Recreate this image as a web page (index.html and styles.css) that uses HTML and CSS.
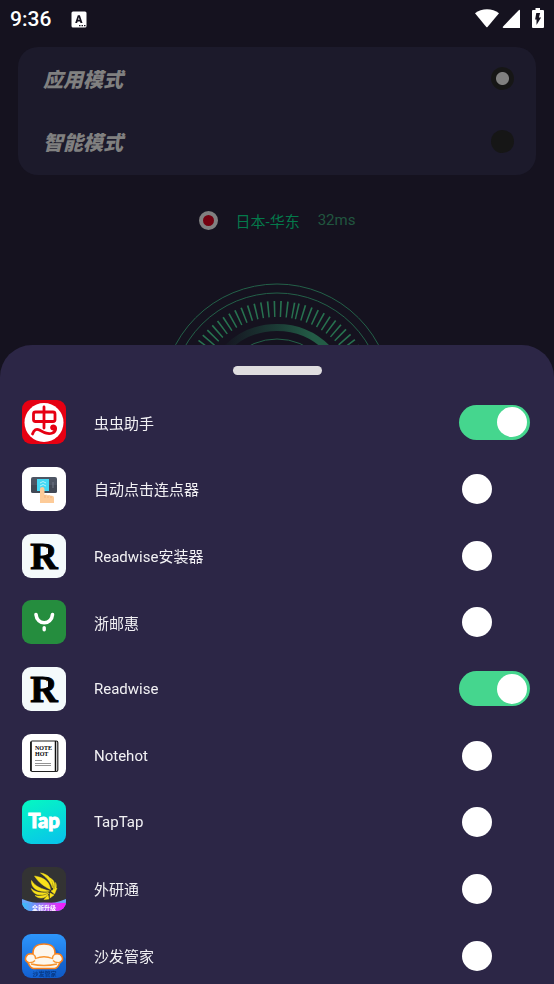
FILE: index.html
```html
<!DOCTYPE html>
<html lang="zh-CN">
<head>
<meta charset="utf-8">
<meta name="viewport" content="width=device-width, initial-scale=1">
<title>应用模式</title>
<link rel="stylesheet" href="styles.css">
</head>
<body>
<header class="status">
  <span class="clock">9:36</span>
  <svg class="notice" viewBox="0 0 16 17" aria-hidden="true"><rect x="0.5" y="0.5" width="15" height="16" rx="1.5" fill="#fff"/><path d="M4.2 12 6.8 4.2h2.1L11.5 12H9.5L9 10.4H6.6L6.1 12zM7.1 8.8h1.5L7.8 6.3z" fill="#15121f"/><path d="M8 14h1.5v1.2H8zm2.5 0H12v1.2h-1.500zm2.500 0h1.500v1.200H13z" fill="#15121f"/></svg>
  <svg class="signals" viewBox="0 0 72 22" aria-hidden="true"><path d="M1 5.300C7.500-.2 18.500-.2 25 5.300L13.500 19q-.6.500-1.200 0z" fill="#fff"/><path d="M46 2.200V20H29.800q-1.800-.2-.7-1.600L44.500 2.500Q46 1.200 46 2.200z" fill="#fff"/><path d="M61.500 0h4.500v2h3q1 0 1 1v16q0 1-1 1H59q-1 0-1-1V3q0-1 1-1h2.500z" fill="#fff"/><path d="M62.300 5h3.800l-1.200 4.600h2.200L62.500 17v-5.600h-1.400z" fill="#15121f"/></svg>
</header>

<main class="page">
  <section class="modes">
    <label class="mode">应用模式<input class="radio" type="radio" name="mode" checked></label>
    <label class="mode">智能模式<input class="radio" type="radio" name="mode"></label>
  </section>
  <p class="server"><span class="flag"></span><span class="place">日本-华东</span><span class="ping">32ms</span></p>
  <svg class="dial" viewBox="0 0 232 232" aria-hidden="true">
    <defs><linearGradient id="arc" x1="0" x2="1"><stop offset="0.1" stop-color="#15121f"/><stop offset="0.5" stop-color="#1b3b35"/><stop offset="0.75" stop-color="#235c46"/></linearGradient></defs>
    <g fill="none" stroke="#236048">
      <circle cx="116" cy="116" r="115"/>
      <circle cx="116" cy="116" r="106"/>
      <circle cx="116" cy="116" r="90" pathLength="360" stroke="#27714f" stroke-width="16" stroke-dasharray="1 2.970" transform="rotate(-77.500 116 116)"/>
      <circle cx="116" cy="116" r="71.500" stroke="url(#arc)" stroke-width="7"/>
      <circle cx="116" cy="116" r="60"/>
    </g>
  </svg>
</main>

<section class="sheet" aria-label="应用列表">
  <div class="handle"></div>
  <div class="apps">
    <label class="app">
      <svg class="icon" viewBox="0 0 44 44" aria-hidden="true"><rect width="44" height="44" fill="#e60012"/><circle cx="22" cy="22.500" r="19.500" fill="#fff"/><g fill="none" stroke="#e60012" stroke-width="2.800" stroke-linecap="round" stroke-linejoin="round"><rect x="11.500" y="12" width="21.500" height="9.500" rx="2"/><path d="M22 7v21M10.500 34c1.500-4.500 4-5.500 7-4 5 2.700 8.500 4.700 13 3 4-1.600 4-7 1-7.200-2.500 0-2.600 3.200-.3 3.200"/></g></svg>
      <span class="name">虫虫助手</span><input class="switch" type="checkbox" checked>
    </label>
    <label class="app">
      <svg class="icon" viewBox="0 0 44 44" aria-hidden="true"><rect width="44" height="44" fill="#fff"/><rect x="9" y="10" width="26" height="16" rx="2" fill="#4d5563"/><path d="M9 18h26v6q0 2-2 2H11q-2 0-2-2z" fill="#424955"/><path d="M15 12h12v12H15z" fill="#43d9f5"/><path d="M18 16q3-3 6 0M18 19q3-3 6 0" fill="none" stroke="#b4f1fb" stroke-width="1"/><path d="M31 15v6" stroke="#717987"/><path d="M18 36V22q0-2 2.200-2t2.300 2v6q2-1 3.200.3 2-.8 3 .5 3.300-.7 3.300 2V36z" fill="#fdcb98"/><path d="M23 28v3M26 29v2M29 29v2" stroke="#eaaa73" stroke-width=".7"/></svg>
      <span class="name">自动点击连点器</span><input class="switch" type="checkbox">
    </label>
    <label class="app">
      <svg class="icon" viewBox="0 0 44 44" aria-hidden="true"><rect width="44" height="44" fill="#f4fafb"/><text class="serif-r" x="22" y="35" text-anchor="middle">R</text><path d="M18.500 21.500l7.500-8v6.500z" fill="#f4fafb"/></svg>
      <span class="name">Readwise安装器</span><input class="switch" type="checkbox">
    </label>
    <label class="app">
      <svg class="icon" viewBox="0 0 44 44" aria-hidden="true"><rect width="44" height="44" fill="#258d3e"/><g fill="none" stroke="#fff" stroke-linecap="round"><path d="M14 14.500c1 11 15.500 11 16.500 0" stroke-width="3.600"/><path d="M22.200 27.800v2" stroke-width="3.400"/></g></svg>
      <span class="name">浙邮惠</span><input class="switch" type="checkbox">
    </label>
    <label class="app">
      <svg class="icon" viewBox="0 0 44 44" aria-hidden="true"><rect width="44" height="44" fill="#f4fafb"/><text class="serif-r" x="22" y="35" text-anchor="middle">R</text><path d="M18.500 21.500l7.500-8v6.500z" fill="#f4fafb"/></svg>
      <span class="name">Readwise</span><input class="switch" type="checkbox" checked>
    </label>
    <label class="app">
      <svg class="icon" viewBox="0 0 44 44" aria-hidden="true"><rect width="44" height="44" fill="#fff"/><rect x="8.800" y="7" width="27" height="30.500" rx="1.500" fill="none" stroke="#222" stroke-width="1.200"/><path d="M9 8v29M33.500 7v30" stroke="#111" stroke-width="1.500"/><text class="note" x="13" y="16">NOTE</text><text class="note" x="13" y="22">HOT</text><path d="M13 26.500h7M13 29.500h16M13 31.500h16" stroke="#666" stroke-width=".7"/></svg>
      <span class="name">Notehot</span><input class="switch" type="checkbox">
    </label>
    <label class="app">
      <svg class="icon" viewBox="0 0 44 44" aria-hidden="true"><defs><linearGradient id="tap" x1=".3" y1="0" x2=".7" y2="1"><stop stop-color="#05f4c5"/><stop offset="1" stop-color="#08c5ea"/></linearGradient></defs><rect width="44" height="44" fill="url(#tap)"/><text class="tap" x="22" y="28" text-anchor="middle">Tap</text></svg>
      <span class="name">TapTap</span><input class="switch" type="checkbox">
    </label>
    <label class="app">
      <svg class="icon" viewBox="0 0 44 44" aria-hidden="true"><defs><linearGradient id="ribbon"><stop stop-color="#35c1fa"/><stop offset=".5" stop-color="#a56af5"/><stop offset="1" stop-color="#fb13fb"/></linearGradient></defs><rect width="44" height="44" fill="#333"/><g fill="#f9e21b" stroke="#f9e21b" stroke-width=".5"><path d="M18.500 6c8 1 13 7 12 15C28 13.500 24 10 18.500 6zM12.500 9c9.500 1.500 15 5.500 16 13.500C23 20 17 16 12.500 9zM9.500 13.500c3.500 6 10.500 8.500 18 10.500C18 26 8.500 22 9.500 13.500zM9.300 21.500c4 4 10.500 5 17 4C20 29.500 11.500 28.500 9.300 21.500zM13 28.500c5 1.500 9.500 0 14-2.500C24 31 18 33 13 28.500zM28 11c4.500 2 6 7 3.500 12C32 18 31 15 28 11zM33.500 15.500c1.500 3 1 6-1.500 8.500 1-3 1.500-5.500 1.500-8.500zM29 24l6-3-2.500 6zM28 26l4 2-4 3zM26 28l1 4-5 .5z"/></g><path d="M0 32q22 9 44 0v12H0z" fill="#6aa5f7"/><path d="M0 36q22-1 44 0v8H0z" fill="url(#ribbon)"/><text class="tiny" x="22" y="42.500" fill="#fff" text-anchor="middle">全新升级</text></svg>
      <span class="name">外研通</span><input class="switch" type="checkbox">
    </label>
    <label class="app">
      <svg class="icon" viewBox="0 0 44 44" aria-hidden="true"><defs><linearGradient id="sofa" x2="0" y2="1"><stop stop-color="#2d95fb"/><stop offset="1" stop-color="#1260d2"/></linearGradient></defs><rect width="44" height="44" fill="url(#sofa)"/><path d="M32 13l12 12v19H22L10 32z" fill="#0b4fb5" opacity=".35"/><path d="M11 20q-.500-10 11-10t11 10c7-1.500 10 5.500 5 8.500q-2 5.500-5.500 6h-21Q8 34 6 28.500C1 25.500 4 18.500 11 20z" fill="#fdf7ed" stroke="#f8801c" stroke-width="1.600"/><path d="M11 20q2.500 1.500 2.500 4.500Q22 21 30.500 24.500q0-3 2.500-4.500M6 28.500q5 .5 7-2M38 28.500q-5 .5-7-2M9 30q13 3 26 0" fill="none" stroke="#f8942f" stroke-width="1.300"/><text class="tiny" x="22.500" y="42" fill="#073a87" text-anchor="middle">沙发管家</text></svg>
      <span class="name">沙发管家</span><input class="switch" type="checkbox">
    </label>
  </div>
</section>
</body>
</html>
```
FILE: styles.css
```css
* {
  box-sizing: border-box;
}

body {
  margin: 0;
  min-height: 100vh;
  overflow: hidden;
  background: #15121f;
  color: #fff;
  font-family: Roboto, "Noto Sans CJK SC", sans-serif;
  font-size: 15px;
}

.status {
  display: flex;
  align-items: center;
  height: 38px;
  padding: 0 8px 0 10px;
}

.clock {
  font-size: 21px;
  font-weight: 500;
}

.notice {
  width: 16px;
  height: 17px;
  margin-left: 20px;
}

.signals {
  width: 72px;
  height: 22px;
  margin-left: auto;
}

.page {
  padding: 9px 18px 0;
}

.modes {
  display: grid;
  height: 128px;
  padding-bottom: 2px;
  border-radius: 20px;
  background: #1c1a2b;
}

.mode {
  display: flex;
  align-items: center;
  justify-content: space-between;
  padding: 0 22px 0 25px;
  color: #808080;
  font-size: 20px;
  font-style: italic;
  font-weight: 900;
}

.radio {
  appearance: none;
  width: 23px;
  height: 23px;
  margin: 0;
  border-radius: 50%;
  background: #161616;
}

.radio:checked {
  background: radial-gradient(circle, #808080 6px, #161616 7px);
}

.server {
  display: flex;
  align-items: center;
  justify-content: center;
  gap: 18px;
  height: 20px;
  margin: 35px 0 0;
}

.flag {
  width: 19px;
  height: 19px;
  border: 4px solid #808080;
  border-radius: 50%;
  background: #73000f;
}

.place {
  color: #04794b;
}

.ping {
  color: #21563f;
}

.dial {
  display: block;
  width: 232px;
  height: 232px;
  margin: 53px auto 0;
}

.sheet {
  position: fixed;
  inset: 345px 0 0;
  overflow: hidden;
  border-radius: 32px 32px 0 0;
  background: #2c2646;
}

.handle {
  width: 89px;
  height: 9px;
  margin: 21px auto 14px;
  border-radius: 5px;
  background: #dfdddf;
}

.apps {
  display: grid;
  grid-template-rows: repeat(9, 1fr);
  min-height: 600px;
}

.app {
  display: flex;
  align-items: center;
  padding: 0 24px 0 22px;
}

.icon {
  width: 44px;
  height: 44px;
  border-radius: 9px;
}

.name {
  flex: 1;
  margin-left: 28px;
  color: #f2f1f4;
}

.switch {
  display: flex;
  align-items: center;
  appearance: none;
  width: 71px;
  height: 35px;
  margin: 0;
  padding: 0 3px;
  border-radius: 18px;
}

.switch::before {
  content: "";
  width: 30px;
  height: 30px;
  border-radius: 50%;
  background: #fff;
}

.switch:checked {
  justify-content: flex-end;
  background: #45d68e;
}

.serif-r {
  fill: #000;
  stroke: #000;
  font: 700 38px "Liberation Serif", serif;
}

.note {
  fill: #000;
  font: 700 6px "Liberation Serif", serif;
}

.tap {
  fill: #fff;
  stroke: #fff;
  font: 900 20px Lato, sans-serif;
}

.tiny {
  font: 700 6px "Noto Sans CJK SC", sans-serif;
}
```
